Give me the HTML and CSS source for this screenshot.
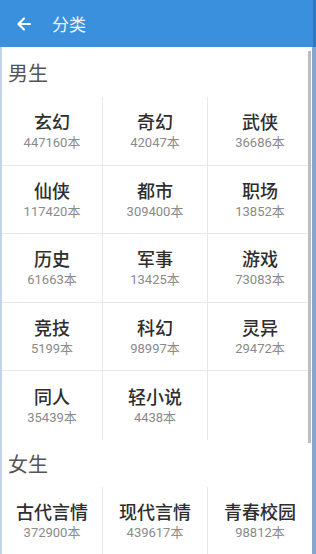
FILE: index.html
```html
<!DOCTYPE html>
<html lang="zh-CN">
<head>
    <meta charset="UTF-8">
    <meta name="viewport" content="width=device-width, initial-scale=1.0">
    <title>分类</title>
    <link rel="stylesheet" href="styles.css">
</head>
<body>
    <div class="screen">
        <header class="toolbar">
            <svg class="back" width="16" height="16" viewBox="0 0 16 16">
                <path d="M14 8H3M8 2.5L2.5 8L8 13.5" fill="none" stroke="#fff" stroke-width="2.2" stroke-linecap="round" stroke-linejoin="round"/>
            </svg>
            <span class="title">分类</span>
        </header>

        <div class="content">
            <div class="section-title first">男生</div>
            <div class="grid">
                <div class="cell"><div class="name">玄幻</div><div class="count">447160本</div></div>
                <div class="cell"><div class="name">奇幻</div><div class="count">42047本</div></div>
                <div class="cell"><div class="name">武侠</div><div class="count">36686本</div></div>
                <div class="cell"><div class="name">仙侠</div><div class="count">117420本</div></div>
                <div class="cell"><div class="name">都市</div><div class="count">309400本</div></div>
                <div class="cell"><div class="name">职场</div><div class="count">13852本</div></div>
                <div class="cell"><div class="name">历史</div><div class="count">61663本</div></div>
                <div class="cell"><div class="name">军事</div><div class="count">13425本</div></div>
                <div class="cell"><div class="name">游戏</div><div class="count">73083本</div></div>
                <div class="cell"><div class="name">竞技</div><div class="count">5199本</div></div>
                <div class="cell"><div class="name">科幻</div><div class="count">98997本</div></div>
                <div class="cell"><div class="name">灵异</div><div class="count">29472本</div></div>
                <div class="cell last-row"><div class="name">同人</div><div class="count">35439本</div></div>
                <div class="cell last-row"><div class="name">轻小说</div><div class="count">4438本</div></div>
            </div>

            <div class="section-title">女生</div>
            <div class="grid">
                <div class="cell last-row"><div class="name">古代言情</div><div class="count">372900本</div></div>
                <div class="cell last-row"><div class="name">现代言情</div><div class="count">439617本</div></div>
                <div class="cell last-row"><div class="name">青春校园</div><div class="count">98812本</div></div>
            </div>

            <div class="scrollbar"></div>
        </div>
    </div>
</body>
</html>
```

FILE: styles.css
```css
* {
    box-sizing: border-box;
}

body {
    margin: 0;
    width: 316px;
    height: 554px;
    overflow: hidden;
    font-family: "Noto Sans CJK SC", "Noto Sans", sans-serif;
    background: #fff;
}

.screen {
    height: 554px;
    display: flex;
    flex-direction: column;
}

.toolbar {
    height: 47px;
    background-color: #3a90dc;
    border-right: 3px solid #2f78c0;
    display: flex;
    align-items: center;
    padding-left: 16px;
}

.back {
    display: block;
}

.title {
    margin-left: 20px;
    color: #e9f3fc;
    font-size: 17px;
    line-height: 1;
}

.content {
    position: relative;
    flex: 1;
    overflow: hidden;
    border-left: 2px solid #c3d4e8;
    border-right: 4px solid #86a5d0;
}

.section-title {
    height: 47px;
    padding-left: 6px;
    display: flex;
    align-items: center;
    font-size: 20px;
    color: #555;
}

.section-title.first {
    height: 50px;
    padding-top: 1px;
}

.grid {
    display: grid;
    grid-template-columns: 101px 105px 1fr;
}

.cell {
    height: 68.5px;
    border-right: 1px solid #e8e8e8;
    border-bottom: 1px solid #e8e8e8;
    display: flex;
    flex-direction: column;
    align-items: center;
    justify-content: center;
}

.cell:nth-child(3n) {
    border-right: none;
}

.cell.last-row {
    border-bottom: none;
}

.name {
    font-size: 18px;
    line-height: 23px;
    font-weight: 500;
    color: #2e2e2e;
}

.count {
    margin-top: 1px;
    font-size: 13px;
    line-height: 17px;
    color: #8a8a8a;
    font-family: Roboto, "Noto Sans CJK SC", sans-serif;
}

.scrollbar {
    position: absolute;
    top: 4px;
    right: 1px;
    width: 3px;
    height: 392px;
    background: #bdbdbd;
}
```
